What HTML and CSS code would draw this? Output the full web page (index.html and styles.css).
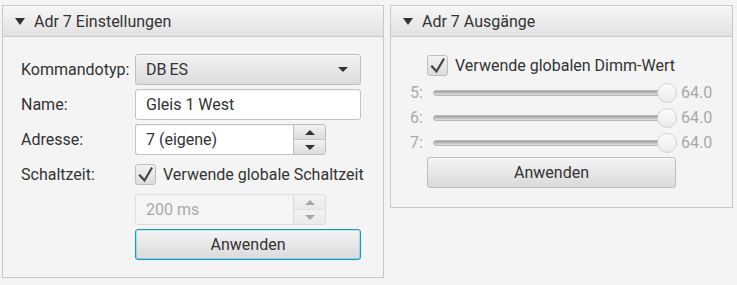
FILE: index.html
```html
<!DOCTYPE html>
<html lang="de">
<head>
  <meta charset="UTF-8">
  <meta name="viewport" content="width=device-width, initial-scale=1.0">
  <title>Adr 7</title>
  <link rel="stylesheet" href="styles.css">
</head>
<body>
  <div class="panes">
    <section class="pane pane-settings">
      <div class="pane-title"><span class="title-arrow"></span>Adr 7 Einstellungen</div>
      <div class="pane-body">
        <div class="form">
          <span class="form-label">Kommandotyp:</span>
          <div class="combo">DB ES<span class="combo-arrow"></span></div>

          <span class="form-label">Name:</span>
          <input type="text" class="text-field" value="Gleis 1 West">

          <span class="form-label">Adresse:</span>
          <div class="spinner">
            <input type="text" class="spinner-field" value="7 (eigene)">
            <div class="spinner-buttons">
              <span class="spin-btn"><span class="arrow-up"></span></span>
              <span class="spin-btn"><span class="arrow-down"></span></span>
            </div>
          </div>

          <span class="form-label">Schaltzeit:</span>
          <label class="check">
            <span class="check-box">
              <svg width="21" height="21" viewBox="0 0 21 21"><path d="M5 11.5 L9.5 16.5 L16.5 4.5" fill="none" stroke="#444444" stroke-width="2.2" stroke-linecap="square"/></svg>
            </span>
            Verwende globale Schaltzeit
          </label>

          <span></span>
          <div class="spinner disabled">
            <input type="text" class="spinner-field" value="200 ms" disabled>
            <div class="spinner-buttons">
              <span class="spin-btn"><span class="arrow-up"></span></span>
              <span class="spin-btn"><span class="arrow-down"></span></span>
            </div>
          </div>

          <span></span>
          <button class="btn focused">Anwenden</button>
        </div>
      </div>
    </section>

    <section class="pane pane-outputs">
      <div class="pane-title"><span class="title-arrow"></span>Adr 7 Ausgänge</div>
      <div class="pane-body">
        <label class="check global-dimm">
          <span class="check-box">
            <svg width="21" height="21" viewBox="0 0 21 21"><path d="M5 11.5 L9.5 16.5 L16.5 4.5" fill="none" stroke="#444444" stroke-width="2.2" stroke-linecap="square"/></svg>
          </span>
          Verwende globalen Dimm-Wert
        </label>

        <div class="slider-row">
          <span class="slider-label">5:</span>
          <div class="slider"><span class="slider-track"></span><span class="slider-knob"></span></div>
          <span class="slider-value">64.0</span>
        </div>
        <div class="slider-row">
          <span class="slider-label">6:</span>
          <div class="slider"><span class="slider-track"></span><span class="slider-knob"></span></div>
          <span class="slider-value">64.0</span>
        </div>
        <div class="slider-row">
          <span class="slider-label">7:</span>
          <div class="slider"><span class="slider-track"></span><span class="slider-knob"></span></div>
          <span class="slider-value">64.0</span>
        </div>

        <button class="btn apply-outputs">Anwenden</button>
      </div>
    </section>
  </div>
</body>
</html>
```

FILE: styles.css
```css
body {
  margin: 0;
  background: #f4f4f4;
  font-family: Roboto, 'Liberation Sans', sans-serif;
  font-size: 16px;
  color: #333333;
}

.panes {
  display: flex;
  align-items: flex-start;
  gap: 6px;
  padding: 5px 0 0 2px;
}

.pane {
  border: 1px solid #c8c8c8;
  background: #f4f4f4;
}

.pane-settings {
  width: 380px;
}

.pane-outputs {
  width: 341px;
}

.pane-title {
  height: 30px;
  border-bottom: 1px solid #c8c8c8;
  background: linear-gradient(to bottom, #f6f6f6, #e2e2e2);
  display: flex;
  align-items: center;
  padding-left: 12px;
  box-shadow: inset 0 1px 0 #fbfbfb;
}

.title-arrow {
  width: 0;
  height: 0;
  border-left: 5px solid transparent;
  border-right: 5px solid transparent;
  border-top: 7px solid #333333;
  margin-right: 9px;
}

/* left pane */

.pane-settings .pane-body {
  padding: 17px 22px 17px 18px;
}

.form {
  display: grid;
  grid-template-columns: 114px 226px;
  grid-auto-rows: 31px;
  row-gap: 4px;
  align-items: center;
}

.combo {
  height: 31px;
  box-sizing: border-box;
  border: 1px solid #bdbdbd;
  border-radius: 3px;
  background: linear-gradient(to bottom, #f2f2f2, #dcdcdc);
  box-shadow: inset 0 1px 0 #fafafa;
  display: flex;
  align-items: center;
  justify-content: space-between;
  padding: 0 12px 0 10px;
  word-spacing: -1px;
}

.combo-arrow {
  width: 0;
  height: 0;
  border-left: 5px solid transparent;
  border-right: 5px solid transparent;
  border-top: 5px solid #333333;
}

.text-field,
.spinner-field {
  font: inherit;
  color: #333333;
  height: 31px;
  box-sizing: border-box;
  border: 1px solid #c2c2c2;
  border-radius: 3px;
  background: #ffffff;
  padding: 0 10px;
  margin: 0;
  outline: none;
  box-shadow: inset 0 1px 1px rgba(0, 0, 0, 0.04);
}

.text-field {
  width: 226px;
}

.spinner {
  display: flex;
  width: 191px;
  height: 31px;
}

.spinner-field {
  width: 158px;
  border-radius: 3px 0 0 3px;
  border-right: none;
}

.spinner-buttons {
  width: 33px;
  display: flex;
  flex-direction: column;
  border: 1px solid #bdbdbd;
  border-radius: 0 3px 3px 0;
  box-sizing: border-box;
  overflow: hidden;
}

.spin-btn {
  flex: 1;
  display: flex;
  align-items: center;
  justify-content: center;
  background: linear-gradient(to bottom, #f2f2f2, #dcdcdc);
}

.spin-btn + .spin-btn {
  border-top: 1px solid #c4c4c4;
}

.arrow-up,
.arrow-down {
  width: 0;
  height: 0;
  border-left: 5px solid transparent;
  border-right: 5px solid transparent;
}

.arrow-up {
  border-bottom: 5px solid #333333;
}

.arrow-down {
  border-top: 5px solid #333333;
}

.spinner.disabled {
  opacity: 0.4;
}

.spinner.disabled .spinner-field {
  background: #f8f8f8;
}

.check {
  display: flex;
  align-items: center;
  gap: 7px;
  white-space: nowrap;
}

.check-box {
  width: 21px;
  height: 21px;
  box-sizing: border-box;
  border: 1px solid #bdbdbd;
  border-radius: 3px;
  background: linear-gradient(to bottom, #f2f2f2, #dcdcdc);
  display: flex;
  align-items: center;
  justify-content: center;
}

.check-box svg {
  display: block;
  margin: -1px;
}

.btn {
  font: inherit;
  color: #333333;
  height: 31px;
  box-sizing: border-box;
  border: 1px solid #bdbdbd;
  border-radius: 3px;
  background: linear-gradient(to bottom, #f4f4f4, #dadada);
  box-shadow: inset 0 1px 0 #fbfbfb;
  padding: 0;
  cursor: pointer;
}

.btn.focused {
  border-color: #039ed3;
  box-shadow: inset 0 0 0 1px rgba(3, 158, 211, 0.25), inset 0 2px 0 #fbfbfb;
}

.form .btn {
  width: 226px;
}

/* right pane */

.pane-outputs .pane-body {
  padding: 18px 10px 19px 19px;
  display: flex;
  flex-direction: column;
  align-items: flex-start;
}

.global-dimm {
  margin-left: 17px;
  height: 21px;
  margin-bottom: 4px;
}

.slider-row {
  display: flex;
  align-items: center;
  height: 25px;
  color: #aaaaaa;
}

.slider-label {
  width: 23px;
}

.slider {
  position: relative;
  width: 244px;
  height: 20px;
  margin-right: 4px;
  display: flex;
  align-items: center;
}

.slider-track {
  width: 100%;
  height: 6px;
  border-radius: 3px;
  box-sizing: border-box;
  border: 1px solid #b8b8b8;
  background: linear-gradient(to bottom, #9c9c9c, #c8c8c8 60%, #dedede);
}

.slider-knob {
  position: absolute;
  right: 0;
  top: 0;
  width: 20px;
  height: 20px;
  box-sizing: border-box;
  border-radius: 50%;
  border: 1px solid #d2d2d2;
  background: linear-gradient(to bottom, #fcfcfc, #ebebeb);
}

.slider-value {
  color: #a8a8a8;
}

.apply-outputs {
  width: 249px;
  margin: 2px 0 0 17px;
}
```
